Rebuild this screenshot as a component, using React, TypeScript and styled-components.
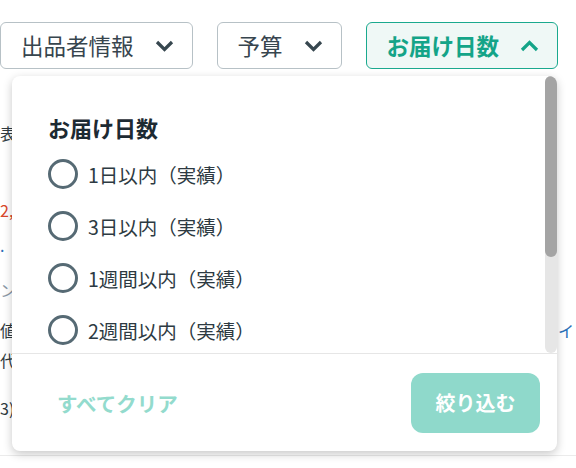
import * as React from "react";
import styled, { createGlobalStyle } from "styled-components";

const GlobalStyle = createGlobalStyle`
  html, body {
    margin: 0;
    padding: 0;
    background: #ffffff;
    font-family: "Noto Sans CJK JP", "Noto Sans", sans-serif;
  }
  * { box-sizing: border-box; }
`;

const Page = styled.div`
  position: relative;
  width: 576px;
  height: 468px;
  overflow: hidden;
`;

const Toolbar = styled.div`
  display: flex;
  gap: 24px;
  padding-top: 22px;
`;

const FilterButton = styled.button<{ $active?: boolean }>`
  display: flex;
  align-items: center;
  gap: 21px;
  height: 47px;
  padding: 0 18px 0 20px;
  border: 1px solid ${(p) => (p.$active ? "#1aa98e" : "#b7c1c6")};
  border-radius: 6px;
  background: ${(p) => (p.$active ? "#eff8f6" : "#ffffff")};
  color: ${(p) => (p.$active ? "#14a488" : "#37454e")};
  font-family: inherit;
  font-size: 22.5px;
  font-weight: ${(p) => (p.$active ? 700 : 400)};
  line-height: 1;
  white-space: nowrap;
`;

const Backdrop = styled.div`
  display: flex;
  flex-direction: column;
  font-size: 16px;
  line-height: 20px;
`;

const BackLine = styled.div<{ $gap: number; $color?: string }>`
  display: flex;
  justify-content: space-between;
  margin-top: ${(p) => p.$gap}px;
  height: 20px;
  color: ${(p) => p.$color ?? "#2f3a40"};
  white-space: nowrap;
`;

const BackRight = styled.span`
  color: #2a6fb8;
  padding-right: 2px;
`;

const PageRule = styled.div`
  margin-top: 37px;
  height: 1px;
  background: #ebebeb;
`;

const Panel = styled.div`
  position: absolute;
  left: 12px;
  top: 76px;
  width: 545px;
  height: 375px;
  display: flex;
  flex-direction: column;
  background: #ffffff;
  border-radius: 8px;
  box-shadow: 0 3px 10px rgba(0, 0, 0, 0.22);
  overflow: hidden;
`;

const ScrollBox = styled.div`
  position: relative;
  flex: 1;
  min-height: 0;
`;

const ScrollArea = styled.div`
  height: 100%;
  overflow: hidden;
  padding: 36px 0 40px 36px;
`;

const ScrollTrack = styled.div`
  position: absolute;
  top: 0;
  right: 0;
  width: 12px;
  height: 100%;
  background: #e6e6e6;
  border-radius: 6px;
`;

const ScrollThumb = styled.div`
  width: 100%;
  background: #a4a4a4;
  border-radius: 6px;
`;

const Title = styled.div`
  font-size: 22px;
  font-weight: 700;
  line-height: 30px;
  color: #1d2a32;
  margin-bottom: 6px;
`;

const Option = styled.label`
  display: flex;
  align-items: center;
  gap: 10px;
  height: 52px;
  font-size: 19.5px;
  color: #2d3a42;
`;

const Radio = styled.span`
  width: 30px;
  height: 30px;
  border: 3px solid #566a74;
  border-radius: 50%;
  flex-shrink: 0;
`;

const Footer = styled.div`
  height: 98px;
  flex-shrink: 0;
  display: flex;
  align-items: center;
  justify-content: space-between;
  padding: 0 17px 0 45px;
  border-top: 1px solid #e6e6e6;
`;

const ClearButton = styled.button`
  border: none;
  background: none;
  padding: 0;
  font-family: inherit;
  font-size: 20.5px;
  font-weight: 700;
  color: #93dbcd;
`;

const ApplyButton = styled.button`
  width: 129px;
  height: 60px;
  border: none;
  border-radius: 12px;
  background: #8fd9cb;
  color: #ffffff;
  font-family: inherit;
  font-size: 20px;
  font-weight: 700;
`;

const Chevron = ({ up, color }: { up?: boolean; color: string }) => (
  <svg width="19" height="12" viewBox="0 0 19 12">
    <polyline
      points={up ? "2,10 9.5,2.5 17,10" : "2,2 9.5,9.5 17,2"}
      fill="none"
      stroke={color}
      strokeWidth="3.2"
    />
  </svg>
);

const options = [
  "1日以内（実績）",
  "3日以内（実績）",
  "1週間以内（実績）",
  "2週間以内（実績）",
  "1ヶ月以内（実績）",
  "2ヶ月以内（実績）",
];

// visible part of the list over its full height
const thumbRatio = 0.655;

const App = () => {
  return (
    <Page>
      <GlobalStyle />
      <Toolbar>
        <FilterButton>
          出品者情報
          <Chevron color="#37474f" />
        </FilterButton>
        <FilterButton>
          予算
          <Chevron color="#37474f" />
        </FilterButton>
        <FilterButton $active>
          お届け日数
          <Chevron up color="#14a488" />
        </FilterButton>
      </Toolbar>

      <Backdrop>
        <BackLine $gap={54}>表示順</BackLine>
        <BackLine $gap={57} $color="#d9472b">2,980円</BackLine>
        <BackLine $gap={15} $color="#2a6fb8">.「マイページ」</BackLine>
        <BackLine $gap={25} $color="#8a97a6">ンジ</BackLine>
        <BackLine $gap={20}>
          <span>値(税込)</span>
          <BackRight>イ</BackRight>
        </BackLine>
        <BackLine $gap={10}>代引き</BackLine>
        <BackLine $gap={28}>3)</BackLine>
        <PageRule />
      </Backdrop>

      <Panel>
        <ScrollBox>
          <ScrollArea>
            <Title>お届け日数</Title>
            {options.map((o) => (
              <Option key={o}>
                <Radio />
                {o}
              </Option>
            ))}
          </ScrollArea>
          <ScrollTrack>
            <ScrollThumb style={{ height: `${thumbRatio * 100}%` }} />
          </ScrollTrack>
        </ScrollBox>
        <Footer>
          <ClearButton>すべてクリア</ClearButton>
          <ApplyButton>絞り込む</ApplyButton>
        </Footer>
      </Panel>
    </Page>
  );
};

export default App;
